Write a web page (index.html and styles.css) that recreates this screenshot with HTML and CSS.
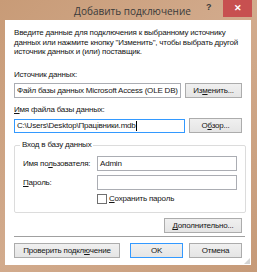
FILE: index.html
```html
<!DOCTYPE html>
<html lang="ru">
<head>
    <meta charset="UTF-8">
    <title>Добавить подключение</title>
    <link rel="stylesheet" href="styles.css">
</head>
<body>
    <div class="window">
        <div class="titlebar">
            <span class="title-spacer"></span>
            <span class="title">Добавить подключение</span>
            <span class="help">?</span>
            <span class="close">&#x2715;</span>
        </div>

        <div class="client">
            <p class="intro">Введите данные для подключения к выбранному источнику данных или нажмите кнопку "Изменить", чтобы выбрать другой источник данных и (или) поставщик.</p>

            <div class="label">Источник данных:</div>
            <div class="row">
                <div class="field source">Файл базы данных Microsoft Access (OLE DB)</div>
                <div class="btn change">Из<u>м</u>енить...</div>
            </div>

            <div class="label file-label"><u>И</u>мя файла базы данных:</div>
            <div class="row">
                <div class="field file focused">C:\Users\Desktop\Працівники.mdb<span class="caret"></span></div>
                <div class="btn browse">О<u>б</u>зор...</div>
            </div>

            <fieldset class="group">
                <legend>Вход в базу данных</legend>
                <div class="login-row">
                    <span class="login-label">Имя по<u>л</u>ьзователя:</span>
                    <div class="field login">Admin</div>
                </div>
                <div class="login-row">
                    <span class="login-label"><u>П</u>ароль:</span>
                    <div class="field login"></div>
                </div>
                <div class="check-row">
                    <span class="checkbox"></span>
                    <span><u>С</u>охранить пароль</span>
                </div>
            </fieldset>

            <div class="advanced-row">
                <div class="btn advanced"><u>Д</u>ополнительно...</div>
            </div>

            <div class="separator"></div>

            <div class="buttons">
                <div class="btn test">Проверить подкл<u>ю</u>чение</div>
                <div class="btn ok">OK</div>
                <div class="btn cancel">Отмена</div>
            </div>
            <div class="grip"></div>
        </div>
    </div>
</body>
</html>
```

FILE: styles.css
```css
body {
    margin: 0;
    font-family: "Liberation Sans", Arial, sans-serif;
    font-size: 8px;
    letter-spacing: -0.2px;
    color: #151515;
}
.window {
    width: 257px;
    height: 272px;
    box-sizing: border-box;
    padding: 0 6px 7px 5px;
    background: linear-gradient(135deg, #c89b77 0%, #d2ab8d 50%, #c69a78 100%);
    display: flex;
    flex-direction: column;
}
.titlebar {
    height: 20px;
    display: flex;
    align-items: flex-start;
    margin-right: -6px;
}
.title-spacer {
    width: 44px;
}
.title {
    flex: 1;
    text-align: center;
    font-family: "Open Sans", Arial, sans-serif;
    font-size: 10px;
    letter-spacing: 0;
    line-height: 22px;
    color: #3a3a3a;
    padding-left: 10px;
}
.help {
    width: 14px;
    font-size: 9px;
    font-weight: bold;
    line-height: 14px;
    color: #3a3a3a;
    margin-right: 3px;
}
.close {
    width: 29px;
    height: 17px;
    margin-right: 5px;
    background: #c75050;
    color: #fff;
    font-size: 9px;
    line-height: 17px;
    text-align: center;
    font-weight: bold;
}
.client {
    flex: 1;
    background: #fff;
    padding: 0 6px 0 9px;
    position: relative;
}
.intro {
    margin: 8px 0 0;
    line-height: 9.7px;
    width: 228px;
}
.label {
    margin-top: 13px;
    line-height: 10px;
}
.file-label {
    margin-top: 7px;
}
.label + .row {
    margin-top: 3px;
}
.row {
    display: flex;
    align-items: center;
}
.field {
    height: 15px;
    box-sizing: border-box;
    border: 1px solid #abadb3;
    background: #fff;
    padding-left: 2px;
    line-height: 13px;
    white-space: nowrap;
    overflow: hidden;
}
.source {
    width: 167px;
}
.file {
    width: 171px;
    height: 14px;
    line-height: 12px;
}
.focused {
    border-color: #3399ff;
}
.caret {
    display: inline-block;
    width: 1px;
    height: 10px;
    background: #000;
    vertical-align: middle;
}
.btn {
    height: 15px;
    box-sizing: border-box;
    border: 1px solid #acacac;
    background: linear-gradient(#f0f0f0, #e5e5e5);
    text-align: center;
    line-height: 13px;
    white-space: nowrap;
}
.change {
    width: 57px;
    margin-left: 4px;
}
.browse {
    width: 53px;
    margin-left: 4px;
}
.group {
    margin: 7px 0 0;
    padding: 3px 0 0 8px;
    height: 73px;
    box-sizing: border-box;
    border: 1px solid #dcdcdc;
    border-radius: 2px;
    width: 232px;
}
.group legend {
    padding: 0 2px;
    margin-left: -3px;
    line-height: 10px;
}
.login-row {
    display: flex;
    align-items: center;
    margin-top: 3px;
}
.login-row + .login-row {
    margin-top: 4px;
}
.login-label {
    width: 74px;
}
.login {
    width: 140px;
    height: 15px;
}
.check-row {
    display: flex;
    align-items: center;
    margin: 4px 0 0 74px;
    line-height: 10px;
}
.checkbox {
    width: 8px;
    height: 8px;
    border: 1px solid #707070;
    background: #fff;
    margin-right: 2px;
}
.advanced-row {
    display: flex;
    justify-content: flex-end;
    margin: 5px 3px 0 0;
}
.advanced {
    width: 78px;
}
.separator {
    height: 1px;
    background: #a0a0a0;
    margin-top: 3px;
    width: 231px;
}
.buttons {
    display: flex;
    margin-top: 6px;
}
.test {
    width: 106px;
}
.ok {
    width: 53px;
    margin-left: 10px;
    border-color: #3399ff;
}
.cancel {
    width: 53px;
    margin-left: 6px;
}
.grip {
    position: absolute;
    right: 1px;
    bottom: 1px;
    width: 6px;
    height: 6px;
    background: radial-gradient(circle, #a0a0a0 0.6px, transparent 0.8px) 0 0 / 2px 2px;
    clip-path: polygon(100% 0, 100% 100%, 0 100%);
}
```
